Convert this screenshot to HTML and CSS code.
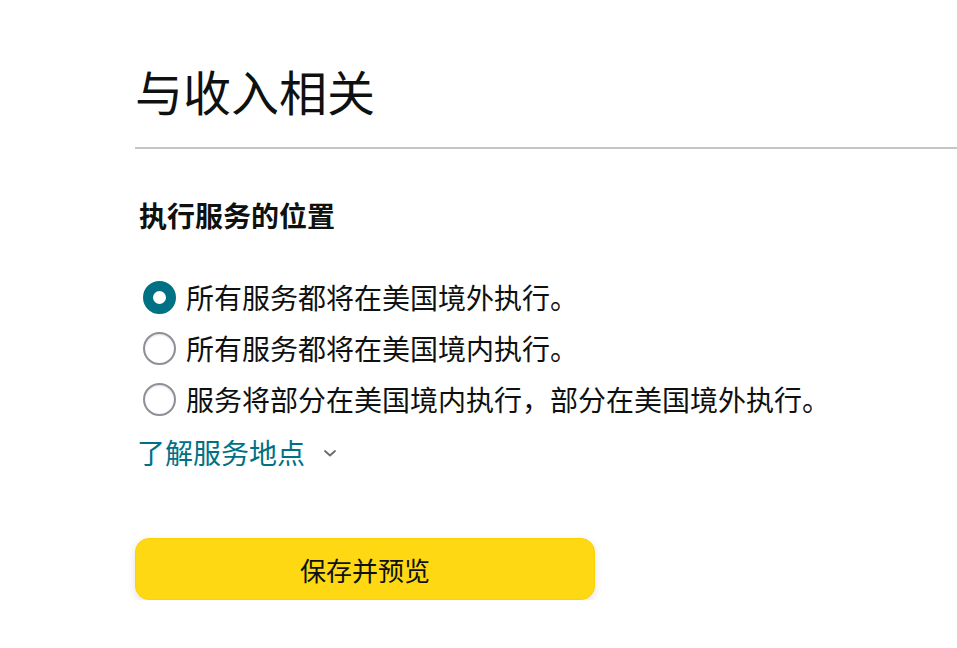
FILE: index.html
```html
<!DOCTYPE html>
<html lang="zh-CN">
<head>
<meta charset="utf-8">
<link rel="stylesheet" href="styles.css">
</head>
<body>
<div class="page">
  <h1 class="title">与收入相关</h1>
  <div class="divider"></div>
  <section class="group">
    <div class="group-label">执行服务的位置</div>
    <div class="options">
      <label class="option"><span class="radio checked"></span><span class="opt-text">所有服务都将在美国境外执行。</span></label>
      <label class="option"><span class="radio"></span><span class="opt-text">所有服务都将在美国境内执行。</span></label>
      <label class="option"><span class="radio"></span><span class="opt-text">服务将部分在美国境内执行，部分在美国境外执行。</span></label>
    </div>
    <a class="learn" href="#">了解服务地点
      <svg class="chev" width="14" height="10" viewBox="0 0 14 10"><path d="M2 3 L7 7.5 L12 3" fill="none" stroke="#6b6b6b" stroke-width="1.8" stroke-linecap="round" stroke-linejoin="round"/></svg>
    </a>
  </section>
  <button class="save">保存并预览</button>
</div>
</body>
</html>
```
FILE: styles.css
```css
* { box-sizing: border-box; }
html, body { margin: 0; padding: 0; background: #fff; }
body {
  font-family: "Noto Sans CJK SC", "Noto Sans", sans-serif;
  color: #0f1111;
}
.page {
  padding: 56px 0 0 135px;
}
.title {
  margin: 0;
  font-size: 48px;
  font-weight: 400;
  line-height: 68px;
}
.divider {
  margin-top: 23px;
  height: 2px;
  background: #c3c6c6;
}
.group {
  padding-top: 48px;
}
.group-label {
  padding-left: 4px;
  font-size: 28px;
  font-weight: 700;
  line-height: 36px;
}
.options {
  margin-top: 46px;
  display: flex;
  flex-direction: column;
  gap: 15px;
}
.option {
  display: flex;
  align-items: center;
  gap: 10px;
  padding-left: 8px;
  height: 36px;
  font-size: 28px;
}
.radio {
  width: 33px;
  height: 33px;
  border-radius: 50%;
  border: 2px solid #8d9096;
  background: #fff;
  flex: none;
  box-shadow: inset 0 1px 2px rgba(0,0,0,0.12);
}
.radio.checked {
  border: 10px solid #007185;
  box-shadow: none;
}
.opt-text { line-height: 36px; }
.learn {
  display: inline-flex;
  align-items: center;
  gap: 18px;
  margin-top: 15px;
  padding-left: 2px;
  font-size: 28px;
  line-height: 40px;
  color: #007185;
  text-decoration: none;
}
.chev { margin-top: 2px; }
.save {
  display: block;
  margin-top: 66px;
  width: 460px;
  height: 62px;
  border: 1px solid #fcd200;
  border-radius: 14px;
  background: #ffd814;
  box-shadow: 0 3px 8px rgba(15,17,17,0.12);
  font-family: "Noto Sans CJK SC", "Noto Sans", sans-serif;
  font-size: 26px;
  color: #0f1111;
  cursor: pointer;
}
```
